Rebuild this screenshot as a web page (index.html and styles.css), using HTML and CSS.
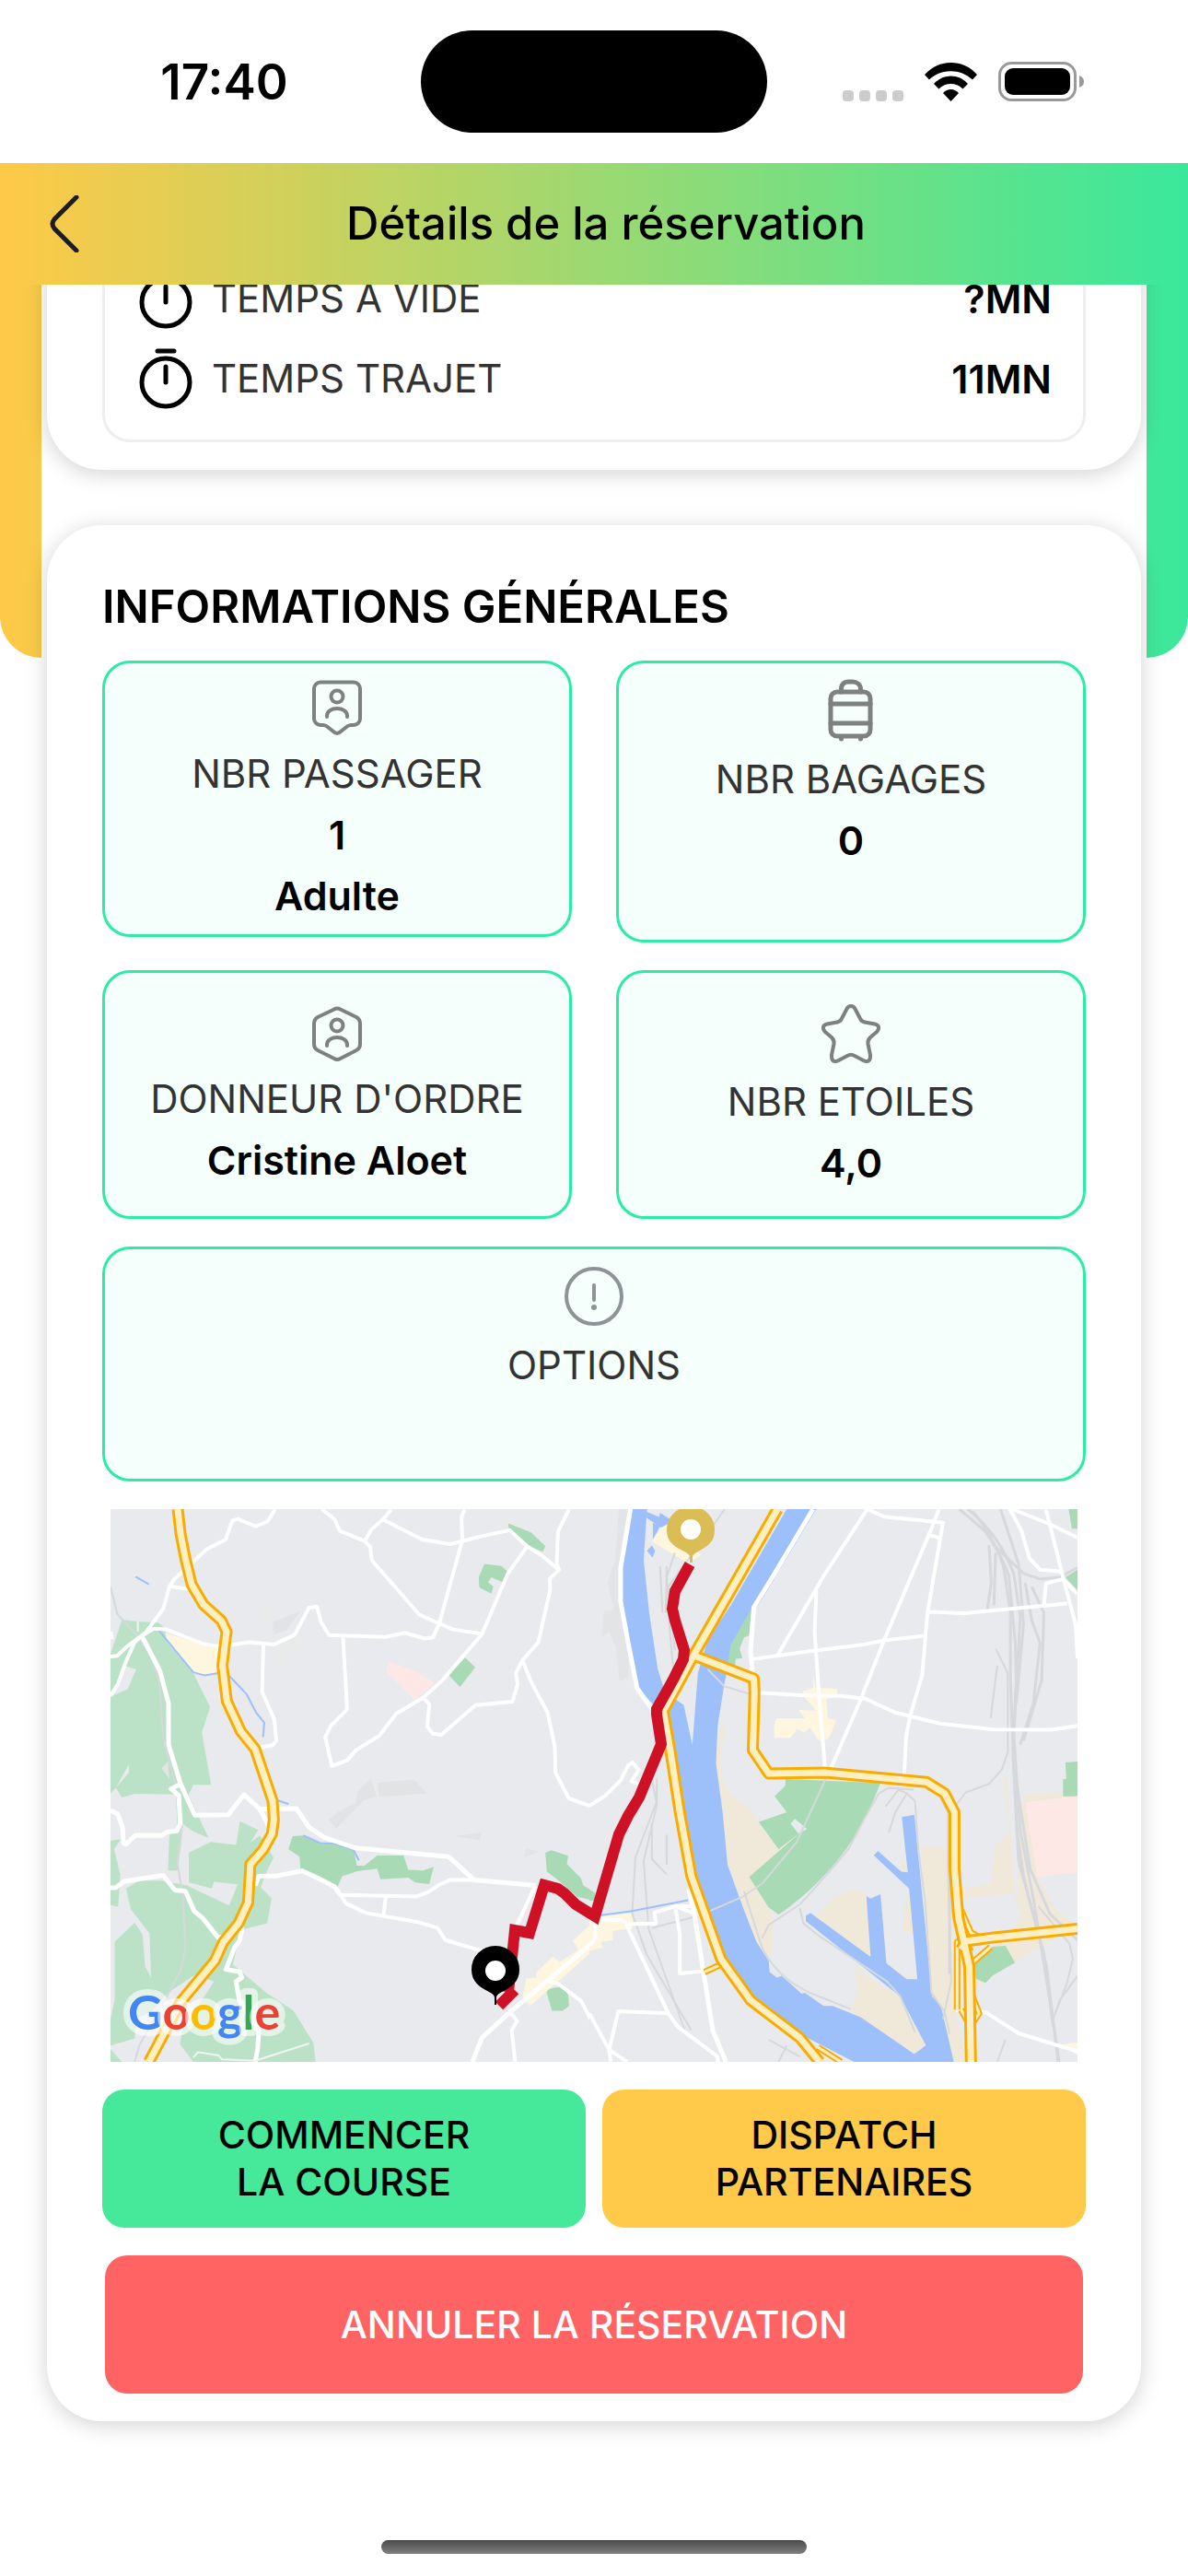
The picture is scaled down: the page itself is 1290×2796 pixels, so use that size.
FILE: index.html
```
<!DOCTYPE html>
<html lang="fr">
<head>
  <meta charset="utf-8">
  <meta name="viewport" content="width=device-width, initial-scale=1">
  <title>Détails de la réservation</title>
  <link rel="stylesheet" href="styles.css">
</head>
<body>
  <div class="status-bar">
    <span class="time">17:40</span>
    <div class="island"></div>
    <div class="status-icons">
      <svg width="66" height="12" viewBox="0 0 66 12" fill="#ccc">
        <rect x="0" width="12" height="12" rx="4"/>
        <rect x="18" width="12" height="12" rx="4"/>
        <rect x="36" width="12" height="12" rx="4"/>
        <rect x="54" width="12" height="12" rx="4"/>
      </svg>
      <svg width="57" height="42" viewBox="0 0 57 42">
        <path d="M0 13C15-4.300 42-4.300 57 13L52 18.500C39 6 18 6 5 18.500z"/>
        <path d="M10 23C20 11.700 37 11.700 47 23L41.500 28.500C34 21.200 23 21.200 15.500 28.500z"/>
        <path d="M20 33C25 27.800 32 27.800 37 33L28.500 42z"/>
      </svg>
      <svg width="94" height="43" viewBox="0 0 94 43">
        <rect x="1.500" y="1.500" width="82" height="40" rx="13" fill="none" stroke="#999" stroke-width="3"/>
        <rect x="7" y="7" width="71" height="29" rx="9"/>
        <path d="M88 15q5 2 5 6.500T88 28z" fill="#999"/>
      </svg>
    </div>
  </div>

  <div class="screen">
    <header class="top-bar">
      <button class="back" type="button" aria-label="Retour">
        <svg width="32" height="62" viewBox="0 0 32 62">
          <path d="M29 2L5 26q-4 5 0 10L29 60" fill="none" stroke="#1c1c24" stroke-width="5" stroke-linecap="round"/>
        </svg>
      </button>
      <h1>Détails de la réservation</h1>
    </header>

    <main class="content">
      <section class="card card-times">
        <div class="times">
          <div class="time-row">
            <svg width="72" height="87" viewBox="0 0 72 87">
              <circle cx="36" cy="48" r="26"/><path d="M36 31v17M27 14h18"/>
            </svg>
            <span class="label">TEMPS A VIDE</span>
            <span class="value">?MN</span>
          </div>
          <div class="time-row">
            <svg width="72" height="87" viewBox="0 0 72 87">
              <circle cx="36" cy="48" r="26"/><path d="M36 31v17M27 14h18"/>
            </svg>
            <span class="label">TEMPS TRAJET</span>
            <span class="value">11MN</span>
          </div>
        </div>
      </section>

      <section class="card card-infos">
        <h2>INFORMATIONS GÉNÉRALES</h2>
        <div class="tiles">
          <div class="tile">
            <svg width="72" height="75" viewBox="0 0 72 75">
              <path d="M18 8.500H54a7 7 0 0 1 7 7V48a7 7 0 0 1-7 7H51c-3 0-4 1-6 3l-5 4c-2.500 2.500-5.500 2.500-8 0l-5-4c-2-2-3-3-6-3H18a7 7 0 0 1-7-7V15.500a7 7 0 0 1 7-7z"/>
              <circle cx="36" cy="24" r="6.500"/><path d="M25 46v-1c0-5 5-8 11-8s11 3 11 8v1"/>
            </svg>
            <span class="label">NBR PASSAGER</span>
            <span class="value">1</span>
            <span class="value">Adulte</span>
          </div>
          <div class="tile">
            <svg class="bag-icon" width="72" height="81" viewBox="0 0 72 81">
              <rect x="14" y="19" width="43" height="48" rx="7"/>
              <path d="M14 32h43M14 53h43M25.500 19v-3c0-5 3-8 8-8h4c5 0 9 3 9 8v3M25.500 68v2M46.500 68v2"/>
            </svg>
            <span class="label">NBR BAGAGES</span>
            <span class="value">0</span>
          </div>
          <div class="tile centered">
            <svg width="72" height="75" viewBox="0 0 72 75">
              <path d="M33 10.500Q36 8.500 39.500 10.500L57 19Q61 21.500 61 26V48Q61 53 57 55L39.500 64Q36 66 33 64L15 55Q11 53 11 48V26Q11 21.500 15 19z"/>
              <circle cx="36" cy="28" r="6.500"/><path d="M25 50v-1c0-5 5-8 11-8s11 3 11 8v1"/>
            </svg>
            <span class="label">DONNEUR D'ORDRE</span>
            <span class="value">Cristine Aloet</span>
          </div>
          <div class="tile centered">
            <svg width="72" height="81" viewBox="0 0 72 81">
              <path d="M36 10C38 10 39.500 11 40.500 13L46 23.500C47 26 48.500 27 51 27.500L62 29.500C66.500 30.500 67.500 34.500 64 38L57 44C55 46 54 48 54.500 51L57 63C57.500 69.500 54.500 71.500 49.500 69L40 64C37.500 62.500 34.500 62.500 32 64L22.500 69C17.500 71.500 14.500 69.500 15 63L17.500 51C18 48 17 46 15 44L8 38C4.500 34.500 5.500 30.500 10 29.500L21 27.500C23.500 27 25 26 26 23.500L31.500 13C32.500 11 34 10 36 10z"/>
            </svg>
            <span class="label">NBR ETOILES</span>
            <span class="value">4,0</span>
          </div>
          <div class="tile wide">
            <svg class="info-icon" width="72" height="81" viewBox="0 0 72 81">
              <circle cx="36" cy="39" r="30"/><path d="M36 27v16"/><circle class="dot" cx="36" cy="51" r="3"/>
            </svg>
            <span class="label">OPTIONS</span>
          </div>
        </div>

        <svg class="map" viewBox="0 0 1050 600" role="img" aria-label="Itinéraire">
          <rect width="1050" height="600" fill="#e8eaed"/>
          <!-- west side -->
          <svg width="520" height="600" viewBox="29 44 1510 1470" preserveAspectRatio="none">
            <g fill="#bbe2c6">
              <path d="M65 338L115 343L180 346L200 360L205 395L290 480L343 570L317 638L346 777L290 777L275 805L338 918L288 900L255 880L252 935L240 1005L210 1005L215 910L240 890L235 803L105 801L65 811L46 785L87 745V722H41L29 640V545L50 553L115 550L85 584L118 650L90 660L87 722L46 785L29 800V545L36 540L83 523L110 470L78 462L29 540V430z"/>
              <path d="M29 926L62 922L40 948L60 1016L53 1102L29 1097z"/>
              <path d="M437 874L495 897L470 930L500 912L543 970L515 1020L503 1050L537 1080L523 1145L440 1163L415 1255L520 1330L605 1377L668 1462L676 1514H290L248 1467L255 1430L355 1300L347 1298L298 1280L325 1228L362 1245L210 1330L160 1380L110 1400L105 1452L29 1470V1400L42 1350V1195L105 1144L130 1175L138 1260L157 1290L152 1172L93 1108L78 1052L120 1032L190 1032L270 1045L403 1098L430 1042L355 1035L349 1053L276 1037V958L345 929L425 937z"/>
              <path d="M29 1480L65 1514H29z"/>
            </g>
            <g fill="#a8dab5">
              <path d="M1283 82L1355 106L1400 142L1392 158L1340 138L1285 96zM1208 190L1262 195L1283 212L1270 240L1230 225L1219 238L1236 250L1230 269L1192 252L1190 225zM1147 439L1179 465L1131 517L1095 485z"/>
              <path d="M603 914L640 912L690 932L740 934L795 948L806 992L830 992L870 965L953 965L968 1003L1014 1005L1048 995L1034 1041L990 1037L968 1024L880 1028L870 1000L808 1007L760 1020L745 1048L628 1000L625 968L590 948z"/>
              <path d="M1418 951L1472 966L1468 988L1512 1025L1520 1045L1568 1070V1088L1500 1075L1440 1030L1405 1008L1400 958zM1402 1322L1450 1313L1472 1335L1475 1365L1455 1378H1421z"/>
            </g>
            <path d="M203 374L320 404L372 412L362 482L325 486L290 480L240 430L207 396z" fill="#fef6df"/>
            <path d="M908 450L985 473L1052 505L987 551L897 476z" fill="#fde8e6"/>
            <path d="M1340 1292L1372 1290V1275L1424 1234L1446 1248L1505 1215L1486 1192L1568 1130V1205L1352 1365L1328 1340z" fill="#fef6df"/>
            <g fill="#e2e3e5">
              <path d="M717 870L745 850L803 825L808 795L850 760L868 808L828 817L742 893zM871 772L985 763L1028 800L875 809zM1116 914L1198 904L1194 925zM1340 946L1382 955L1332 970zM540 345L627 315L585 366L542 378zM190 733L210 715L215 762z"/>
              <path d="M532 274L537 325L500 355L505 320zM552 400L625 365L641 398L580 437V480L543 473z" fill="#e9ebea"/>
            </g>
            <g class="rail">
              <path d="M29 250L50 322L118 385L160 440L182 500L196 655L232 770L255 890L240 985L258 1080L265 1215L250 1270L210 1335L160 1410L120 1470L105 1514"/>
            </g>
            <g class="water-line">
              <path d="M108 224L150 244M158 354L180 365L290 478L325 486L368 480M403 487L458 536L488 585L514 612L510 650M550 817L590 828M637 912L690 932L740 934L795 950L812 978"/>
            </g>
            <g class="road">
              <path d="M548 44L525 76L487 90L430 70L413 75L392 125L330 152L270 200L230 230L215 250L195 310L140 372L120 385L80 410L50 434L29 436M218 250L288 258M29 370L34 390"/>
              <path d="M29 540L52 510L75 455L105 398L130 380L165 362L205 364L320 402L375 410L465 398L545 404L610 378L655 306L680 303L692 343L718 379L897 384L958 373L1018 388L1046 385L1065 350L1138 128L1136 65L1146 44"/>
              <path d="M695 44L735 71L752 102L830 129L852 98L890 70L915 44M830 129L848 145L853 180L1003 325L1065 348L1110 364L1200 376M890 73L1012 125L1100 137L1200 116L1288 100L1343 143L1390 168L1443 206L1415 228V260L1378 398L1328 446L1307 480L1313 510L1296 556L1180 565L1072 644L1045 641L1028 622L1034 563L1015 545"/>
              <path d="M1475 44L1440 104L1436 188L1443 206M1343 143L1282 215L1200 377L1075 500L1015 545L930 588L877 646L803 685L775 712L727 727L706 650L724 620L775 577L762 383M511 404L507 530L545 602L552 660L540 672L488 680"/>
              <path d="M1328 446L1355 503L1407 585L1430 675L1432 745L1474 813L1540 833L1568 825M755 1070L995 1074L1030 1063L1065 1043L1100 1030L1170 1030M897 1074L890 1125M750 1065L772 1093L835 1118L998 1142L1060 1158L1085 1190L1205 1220L1245 1240M1368 1046L1305 1160M1405 1298L1440 1306L1513 1352L1568 1440M1290 1382L1311 1405L1294 1430L1305 1514"/>
            </g>
            <g class="road big">
              <path d="M130 385L185 475L212 560V670L250 775L295 858L400 857L450 803L500 842L615 840L655 890L705 918L800 945L1095 968L1175 1030L1370 1045M500 842L530 890M250 775L220 788L244 805L249 880L238 900L208 902L192 912L108 911L78 935L70 932L67 890L52 855L29 845"/>
              <path d="M29 1051H45L72 1034L195 1018L232 1057L265 1060L293 1113L320 1132L370 1185L385 1180M485 1045L497 1020L550 1020L634 1006L690 1028L735 1048L755 1070M440 1150L443 1165L436 1192L420 1210L393 1268L436 1274L443 1290L425 1300L435 1350L475 1400L497 1430L493 1480L485 1514"/>
              <path d="M1568 1140L1555 1150L1556 1192L1405 1300L1290 1380L1200 1450L1170 1514"/>
            </g>
            <path class="rail light" d="M290 1502L305 1488L370 1497L380 1507L485 1511L655 1465M115 343V370"/>
            <g class="highway">
              <path id="west-road" d="M241 44L250 110L265 175L285 245L322 298L378 340L395 370L388 415L382 460L396 555L440 635L485 682L540 820L544 870L538 908L510 950L470 988L463 1090L433 1145L385 1195L358 1245L250 1355L150 1514"/>
              <use href="#west-road" class="core"/>
            </g>
          </svg>
          <!-- river side -->
          <svg x="520" width="530" height="600" viewBox="0 44 1484 1470" preserveAspectRatio="none">
            <g fill="#f0e9d9">
              <path d="M404 620L418 618L402 680L404 760L425 800L485 840L522 890L575 948L635 903L640 912L490 1020L520 1070L558 1125L556 1200L548 1245L505 1190L465 1100L420 990L385 725L390 640z"/>
              <path d="M695 1120L745 1075L812 1052L845 1075L855 1235L695 1135zM805 1262L945 1345L1023 1470L988 1493L825 1395L795 1375L817 1320zM1010 940L1083 946L1085 1020L1108 1110L1110 1380L1150 1514H1108L1065 1360L1042 1345L1010 1000zM955 960L967 1008L945 1008zM960 1090L975 1055L985 1175L952 1160zM905 1252L965 1290L995 1284L997 1295L930 1300z"/>
              <path d="M1258 757L1268 757L1281 900L1285 1000L1300 1110L1305 1065L1180 1075L1140 1080V1053L1223 1040L1233 938L1280 900zM1320 805L1484 794V810L1327 825L1363 1022L1420 1110L1484 1150L1290 1250L1180 1315L1150 1270L1285 1165L1308 1130L1302 990z"/>
            </g>
            <g fill="#9dc0fa">
              <path d="M128 44H175L165 180L182 320L208 470L230 530L287 565L313 672L330 480L360 390L430 300L600 44H690L520 290L440 390L410 510L390 620L385 720L405 850L420 990L470 1110L508 1195L545 1245L548 1275L570 1290L585 1285L645 1333L655 1330L712 1365L740 1365L825 1395L988 1493L1023 1470L945 1340L658 1140V1125L672 1118L855 1235L842 1073L855 1080L885 1068L903 1252L965 1294H997L972 1053L865 965L877 953L948 1008L968 1010L950 863L988 857L1042 1340L1068 1362L1108 1514H805L640 1440L490 1350L400 1240L310 1000L230 600L190 560L145 520L92 280L95 200z"/>
              <path d="M170 50L212 65L215 54L248 72L230 100L170 65zM193 80L215 90L193 125zM175 155L190 140L200 155L192 173z"/>
            </g>
            <path d="M245 80L340 165L300 188L190 130L215 95zM680 485L688 520L755 521L752 540L720 550L725 600L748 605L742 627L725 657L695 658L672 625L652 639L632 628L612 652H562V620L568 600L655 600L637 578L690 580L650 540L648 528L680 520zM0 1130L133 1118L132 1160L70 1165L72 1190L35 1195L40 1210L0 1218zM1435 1468L1484 1462V1496z" fill="#fef6df"/>
            <g fill="#a8dab5">
              <path d="M597 762L885 772C860 830 820 900 783 945C730 1010 650 1080 575 1122L545 1103L522 1072L486 1022L640 905L575 948L515 876L600 850L563 807L595 780zM495 305L485 380L470 385L457 415L465 440L445 442L440 480L420 460L430 405zM1457 44H1484V96H1467zM1484 205L1447 225L1484 260zM1447 718L1484 715V808H1440V762H1450zM1265 1205L1294 1250L1225 1285L1205 1304L1175 1293L1170 1255L1225 1208zM0 1055L18 1065V1085H0z"/>
            </g>
            <path d="M612 880L625 868L662 895L635 907z" fill="#e8eaed"/>
            <path d="M1325 824L1484 807V1010L1362 1023z" fill="#fde8e6"/>
            <path d="M90 44H115L92 180V300L120 440L118 490L92 502L80 410L60 370L36 386L45 315L75 312L55 240L78 180z" fill="#e2e4e6"/>
            <g class="rail">
              <path d="M412 44L290 190L240 250L260 420M215 195L222 320M235 195L232 320M260 160L235 225L243 350L255 470M360 470L410 515L485 535M718 762L630 930L525 1040L465 1075L365 1113M470 1060L525 1210Q570 1290 670 1330L795 1374M525 1185L545 1150L640 1095Q720 1020 790 945Q840 860 880 800L910 785L985 790"/>
              <path d="M640 1105L650 1145L700 1180L905 1300L945 1340L990 1435M990 820L1000 950L1020 1080L1040 1330L1080 1380L1095 1440M990 820L965 800L930 850L910 905M965 800L940 790L900 835M1028 790L1060 800L1090 850V1000L1100 1300L1075 1400"/>
              <path d="M1115 830L1145 797L1215 775L1255 735L1272 690V480L1235 415M1240 460L1220 600M205 760V820L140 970L130 1120L175 1230L310 1430M190 760L205 830L165 980L180 1160L290 1430M190 880V975L235 1015M235 910V990M190 1158L320 1128M545 1455L640 1500M600 1470L575 1514"/>
              <path d="M1484 1285L1430 1350L1410 1400L1430 1514M1365 1100L1460 1200L1470 1240L1450 1310L1410 1400M1265 1455L1240 1514"/>
            </g>
            <g class="rail thick">
              <path d="M1125 44L1200 100Q1245 150 1260 200L1280 320V480L1285 620L1300 900L1320 1020L1390 1260L1425 1514"/>
              <path d="M1150 44Q1245 110 1290 215L1310 330L1290 640L1310 900L1350 1080L1400 1350"/>
              <path d="M1165 50Q1225 110 1275 220L1295 400L1298 500L1288 700L1305 980L1380 1220L1410 1420"/>
              <path d="M1250 44L1305 190L1320 350L1298 560M1325 240L1345 340L1370 400L1350 560L1310 670M1345 250L1382 320L1375 500L1320 660M1215 140L1222 240L1210 310M1235 160L1230 300M1484 200L1430 225L1370 230L1320 215L1230 140M1484 1190L1400 1120L1340 1000L1300 780M1095 860V1280"/>
            </g>
            <path class="water-line" d="M0 1128L130 1113L300 1084"/>
            <g class="road">
              <path d="M845 44L712 222L572 433M845 44L895 64L1075 80L1028 320L1012 485L975 595L963 650L957 750M1063 44L1038 100L895 395L826 548L732 738M1030 112L1070 122M690 260L685 370L698 540L717 738M495 443L685 420L830 405L895 393L1025 380M1030 317L1140 321L1452 295M515 532L645 539L765 541L838 548L930 585L1065 614L1230 630L1405 631L1484 620"/>
              <path d="M1278 44L1313 100L1338 175L1370 205L1435 210M1285 44L1395 82L1484 120M1388 44L1440 225L1478 350L1484 440M1440 230L1388 242L1382 300M1440 230L1484 270"/>
              <path d="M0 833L50 805L95 765L118 725L132 718L150 738L128 768L148 775M0 1135L98 1137L120 1148L202 1146L198 1117L262 1100L310 1100M112 1148L240 1385L268 1420L390 1500V1514M240 1385L88 1379L60 1482L115 1514M0 1385L60 1482L65 1514M262 1108L275 1175V1279L352 1272M262 1100L315 1118M18 1140V1185L0 1205M1115 1376L1205 1382L1305 1438L1484 1486"/>
            </g>
            <g class="road big">
              <path d="M125 44L95 200V290L118 400L145 520L190 575M680 44L560 220L500 305L490 420L497 490M302 1055L318 1115L375 1430L415 1514"/>
            </g>
            <g class="slips">
              <path id="slips" d="M350 1275L400 1255M695 1475L765 1514M1130 1110L1160 1170L1200 1190M1165 1250L1220 1208M1118 1375V1195L1140 1190L1160 1220M1165 1340L1185 1385L1158 1420L1130 1375"/>
              <use href="#slips" class="core"/>
            </g>
            <g class="highway">
              <path id="east-road" d="M572 44L325 420L300 460L225 580M225 580L245 680L275 850L310 1020L400 1240L490 1350L640 1450L700 1514M322 435L500 495L502 530L497 685L545 747L720 745L1025 770L1080 800L1110 850V1000L1122 1130L1155 1260L1160 1514M1130 1215L1145 1193L1230 1183L1484 1160"/>
              <use href="#east-road" class="core"/>
            </g>
          </svg>
          <!-- route and pins -->
          <path class="route" d="M629 60L613 89L610 108L613 121L623 153L622 163L612 183L606 194L593 217V223L598 255L574 313L562 333L552 353L526 442L505 429L493 417L486 412L471 408L455 460L439 457L432 524M439 522L422 539"/>
          <path d="M418 474a26 25 0 0 1 26 26c0 13-9 19-19 24q-6 3-6 6v8h-2v-8q0-3-6-6c-10-5-19-11-19-24a26 25 0 0 1 26-26z"/>
          <circle cx="418" cy="501" r="11" fill="#fff"/>
          <path d="M630-3a26 25 0 0 1 26 26c0 13-9 18-18 23q-6 3-6 6v6h-3v-6q0-3-6-6c-10-5-19-10-19-23a26 25 0 0 1 26-26z" fill="#dbbd55"/>
          <circle cx="630" cy="22" r="11" fill="#fff"/>
          <text class="google" x="19" y="565"><tspan fill="#4285f4">G</tspan><tspan fill="#ea4335">o</tspan><tspan fill="#fbbc04">o</tspan><tspan fill="#4285f4">g</tspan><tspan fill="#34a853">l</tspan><tspan fill="#ea4335">e</tspan></text>
        </svg>

        <div class="actions">
          <button class="btn start" type="button">COMMENCER<br>LA COURSE</button>
          <button class="btn dispatch" type="button">DISPATCH<br>PARTENAIRES</button>
        </div>
        <button class="btn cancel" type="button">ANNULER LA RÉSERVATION</button>
      </section>
    </main>
  </div>

  <div class="home-indicator"></div>
</body>
</html>
```
FILE: styles.css
```
* {
  box-sizing: border-box;
}

body {
  margin: 0;
  min-height: 100vh;
  display: flex;
  flex-direction: column;
  background: #fff;
  color: #000;
  font-family: Inter, "Liberation Sans", sans-serif;
}

svg {
  display: block;
}

.status-bar {
  display: grid;
  grid-template-columns: 1fr 376px 1fr;
  height: 177px;
  align-items: center;
}

.time {
  justify-self: center;
  padding-left: 30px;
  font-size: 53px;
  font-weight: 600;
}

.island {
  height: 111px;
  border-radius: 56px;
  background: #000;
}

.status-icons {
  display: flex;
  align-items: flex-end;
  justify-content: center;
  gap: 23px;
  padding-right: 30px;
}

.screen {
  position: relative;
}

/* coloured backdrop behind the header and the first cards */
.screen::before {
  content: "";
  position: absolute;
  top: 0;
  left: 0;
  width: 100%;
  height: 537px;
  border-radius: 0 0 45px 45px;
  background: linear-gradient(90deg, #ffc947, #3ae89b);
}

.top-bar {
  position: relative;
  z-index: 2;
  display: flex;
  align-items: center;
  height: 132px;
  padding: 0 60px 0 54px;
  background: linear-gradient(90deg, #ffc947, #3ae89b);
}

.back {
  padding: 0;
  border: none;
  background: none;
  cursor: pointer;
}

h1 {
  flex: 1;
  margin: 0;
  font-size: 49px;
  font-weight: 500;
  line-height: 60px;
  text-align: center;
}

.content {
  position: relative;
  margin: 0 45px;
  padding: 0 6px;
  background: #fff;
}

.card {
  border-radius: 60px;
  background: #fff;
  box-shadow: 0 4px 24px rgba(0, 0, 0, 0.18);
}

/* first card is scrolled under the header */
.card-times {
  margin-top: -96px;
  padding: 27px 60px 30px;
}

.times {
  padding: 37px 34px 23px 30px;
  border: 3px solid #eee;
  border-radius: 30px;
}

.time-row {
  display: flex;
  align-items: center;
  gap: 14px;
  height: 87px;
}

.time-row svg {
  fill: none;
  stroke: #000;
  stroke-width: 5;
  stroke-linecap: round;
}

.label {
  color: #333;
  font-size: 42px;
  line-height: 66px;
}

.value {
  font-size: 43px;
  font-weight: 600;
  line-height: 66px;
}

.time-row .value {
  margin-left: auto;
}

.card-infos {
  margin-top: 60px;
  padding: 56px 60px 30px;
}

h2 {
  margin: 0 0 25px;
  font-size: 49px;
  font-weight: 600;
  line-height: 66px;
}

.tiles {
  display: grid;
  grid-template-columns: 1fr 1fr;
  gap: 30px 48px;
  align-items: start;
}

.tile {
  display: flex;
  flex-direction: column;
  align-items: center;
  min-height: 300px;
  padding: 12px 12px 9px;
  border: 3px solid #2aeca4;
  border-radius: 30px;
  background: #f5fffc;
}

.tile:nth-child(2) {
  min-height: 306px;
}

.tile.centered {
  justify-content: center;
  min-height: 270px;
  padding: 0 12px;
}

.tile.wide {
  grid-column: 1 / -1;
  min-height: 255px;
}

.tile svg {
  fill: none;
  stroke: #7d817f;
  stroke-width: 4;
  stroke-linecap: round;
  stroke-linejoin: round;
}

.tile .bag-icon {
  stroke-width: 5;
}

.tile .info-icon {
  stroke: #8c9496;
}

.info-icon .dot {
  fill: #8c9496;
  stroke: none;
}

.map {
  width: calc(100% - 18px);
  height: auto;
  margin: 30px auto;
}

.map path {
  vector-effect: non-scaling-stroke;
}

.rail,
.water-line,
.road,
.slips,
.highway {
  fill: none;
  stroke-linejoin: round;
}

.rail {
  stroke: #d6d8db;
  stroke-width: 2;
}

.rail.thick {
  stroke-width: 3;
}

.rail.light {
  stroke: #f1f5f2;
}

.water-line {
  stroke: #9dc0fa;
  stroke-width: 2;
}

.road {
  stroke: #fff;
  stroke-width: 4;
}

.road.big {
  stroke-width: 5;
}

.slips {
  stroke: #f9ab00;
  stroke-width: 7;
}

.slips .core {
  stroke: #feefc3;
  stroke-width: 3;
}

.highway {
  stroke: #f9ab00;
  stroke-width: 13;
}

.highway .core {
  stroke: #feefc3;
  stroke-width: 7;
}

.route {
  fill: none;
  stroke: #cf1126;
  stroke-width: 12;
}

.google {
  font-family: Lato, Inter, sans-serif;
  font-size: 52px;
  font-weight: 700;
  stroke: rgba(255, 255, 255, 0.6);
  stroke-width: 14;
  stroke-linejoin: round;
  paint-order: stroke;
}

.actions {
  display: grid;
  grid-template-columns: 1fr 1fr;
  gap: 18px;
}

.btn {
  min-height: 150px;
  padding: 0 24px;
  border: none;
  border-radius: 24px;
  color: #000;
  font-family: inherit;
  font-size: 41px;
  font-weight: 500;
  line-height: 51px;
  cursor: pointer;
}

.start {
  background: #46e99a;
}

.dispatch {
  background: #ffc94a;
}

.cancel {
  display: block;
  width: calc(100% - 6px);
  margin: 30px auto 0;
  background: #ff6363;
  color: #fff;
}

.home-indicator {
  width: 462px;
  height: 15px;
  margin: auto auto 24px;
  border-radius: 8px;
  background: linear-gradient(#4a4a4a, #808080);
}
```
